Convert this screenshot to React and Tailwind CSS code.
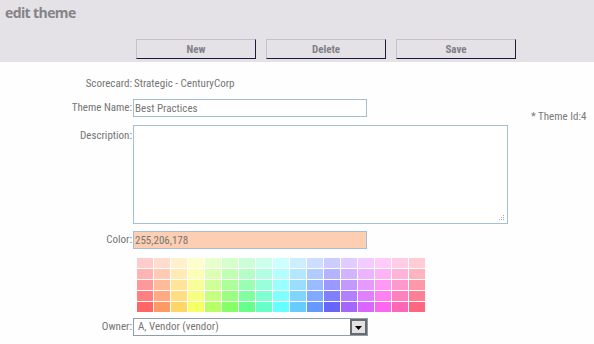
import React from "react";

const hues = [0, 20, 44, 64, 88, 108, 135, 158, 180, 200, 220, 240, 264, 286, 306, 330, 350];
const lights = [90, 85, 80, 75, 70];

function Field({ label, children, top = false, className = "" }) {
  return (
    <div className={`flex ${top ? "items-start" : "items-center"} ${className}`}>
      <div className={`w-[133px] shrink-0 text-right pr-[1px] ${top ? "pt-[3px]" : ""}`}>{label}</div>
      {children}
    </div>
  );
}

function HeaderButton({ children }) {
  return (
    <button className="w-[120px] h-[20px] bg-[#e4e2e6] border border-t-[#c4c0cc] border-l-[#c4c0cc] border-b-[#1e1a3a] border-r-[#1e1a3a] text-[11px] font-bold text-[#828088] leading-none">
      {children}
    </button>
  );
}

export default function App() {
  return (
    <div className="w-[594px] h-[344px] overflow-hidden bg-[#fdfefd] font-['Roboto',sans-serif] font-stretch-semi-condensed text-[11px] text-[#757575]">
      <div className="bg-[#e4e2e6] h-[62px] flex flex-col">
        <h1 className="pl-[5px] pt-[4px] leading-[18px] text-[14px] font-bold text-[#858388] font-['Open_Sans',sans-serif] font-stretch-normal tracking-[-0.6px]">
          edit theme
        </h1>
        <div className="flex gap-[10px] pl-[136px] mt-[17px]">
          <HeaderButton>New</HeaderButton>
          <HeaderButton>Delete</HeaderButton>
          <HeaderButton>Save</HeaderButton>
        </div>
      </div>

      <div className="flex flex-col pt-[15px]">
        <Field label="Scorecard:" className="h-[14px]">
          <span className="pl-[1px]">Strategic - CenturyCorp</span>
        </Field>

        <Field label="Theme Name:" className="h-[18px] mt-[8px]">
          <input
            readOnly
            value="Best Practices"
            className="w-[234px] h-[18px] border border-[#a2c0d6] bg-white px-[1px] text-[11px] text-[#757575] outline-none"
          />
          <span className="ml-[164px] mt-[17px] leading-[12px] whitespace-nowrap text-[#7a7a7a]">* Theme Id:4</span>
        </Field>

        <Field label="Description:" top className="mt-[8px]">
          <div className="relative w-[375px] h-[99px] border border-[#a2c0d6] bg-white">
            <textarea readOnly className="w-full h-full resize-none outline-none bg-transparent" />
            <svg className="absolute right-[2px] bottom-[2px]" width="6" height="6" viewBox="0 0 6 6">
              <rect x="4" y="0" width="1" height="1" fill="#a8a8a8" />
              <rect x="2" y="2" width="1" height="1" fill="#a8a8a8" />
              <rect x="4" y="2" width="1" height="1" fill="#a8a8a8" />
              <rect x="0" y="4" width="1" height="1" fill="#a8a8a8" />
              <rect x="2" y="4" width="1" height="1" fill="#a8a8a8" />
              <rect x="4" y="4" width="1" height="1" fill="#a8a8a8" />
            </svg>
          </div>
        </Field>

        <Field label="Color:" className="h-[18px] mt-[7px]">
          <input
            readOnly
            value="255,206,178"
            className="w-[234px] h-[18px] border border-[#a2c0d6] bg-[#fdceb2] px-[1px] text-[11px] text-[#757575] outline-none"
          />
        </Field>

        <div className="mt-[9px] pl-[137px] flex flex-col gap-[1px]">
          {lights.map((l) => (
            <div key={l} className="flex gap-[1px]">
              {hues.map((h) => (
                <div key={h} className="w-[16px] h-[10px]" style={{ backgroundColor: `hsl(${h},100%,${l}%)` }} />
              ))}
            </div>
          ))}
        </div>

        <Field label="Owner:" className="h-[18px] mt-[6px]">
          <div className="w-[235px] h-[18px] border border-[#8e9eae] bg-white flex items-center pl-[4px] relative">
            <span className="text-[#757575]">A, Vendor (vendor)</span>
            <div className="absolute right-[0px] top-[0px] w-[17px] h-[16px] border-2 border-[#6a6a6a] bg-[#e2e2e2] flex items-end justify-center pb-[3px]">
              <svg width="7" height="4" viewBox="0 0 7 4">
                <polygon points="0,0 7,0 3.5,4" fill="#000" />
              </svg>
            </div>
          </div>
        </Field>
      </div>
    </div>
  );
}
